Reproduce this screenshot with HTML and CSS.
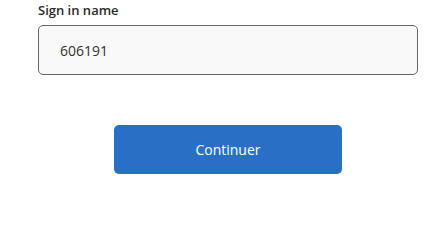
FILE: index.html
```html
<!DOCTYPE html>
<html lang="fr">
<head>
<meta charset="utf-8">
<link rel="stylesheet" href="styles.css">
</head>
<body>
<main class="form">
  <label class="label" for="signin">Sign in name</label>
  <input class="field" id="signin" type="text" value="606191">
  <div class="actions">
    <button class="btn" type="button">Continuer</button>
  </div>
</main>
</body>
</html>
```
FILE: styles.css
```css
html, body {
  margin: 0;
  padding: 0;
  background: #ffffff;
}
body {
  font-family: "Open Sans", "Noto Sans", "Liberation Sans", sans-serif;
  color: #323130;
}
.form {
  display: flex;
  flex-direction: column;
  width: 380px;
  margin-left: 38px;
}
.label {
  font-size: 13px;
  font-weight: 600;
  line-height: 18px;
  height: 18px;
  margin-top: 1px;
  color: #2b2b2b;
}
.field {
  box-sizing: border-box;
  margin-top: 6px;
  width: 380px;
  height: 50px;
  padding: 0 0 0 21px;
  border: 1px solid #666666;
  border-radius: 5px;
  background: #f9f9f9;
  font-family: inherit;
  font-size: 14px;
  color: #323130;
  outline: none;
}
.actions {
  display: flex;
  justify-content: center;
  margin-top: 50px;
}
.btn {
  width: 228px;
  height: 49px;
  border: none;
  border-radius: 5px;
  background: #2a6fc6;
  color: #ffffff;
  font-family: inherit;
  font-size: 14px;
  cursor: pointer;
}
```
